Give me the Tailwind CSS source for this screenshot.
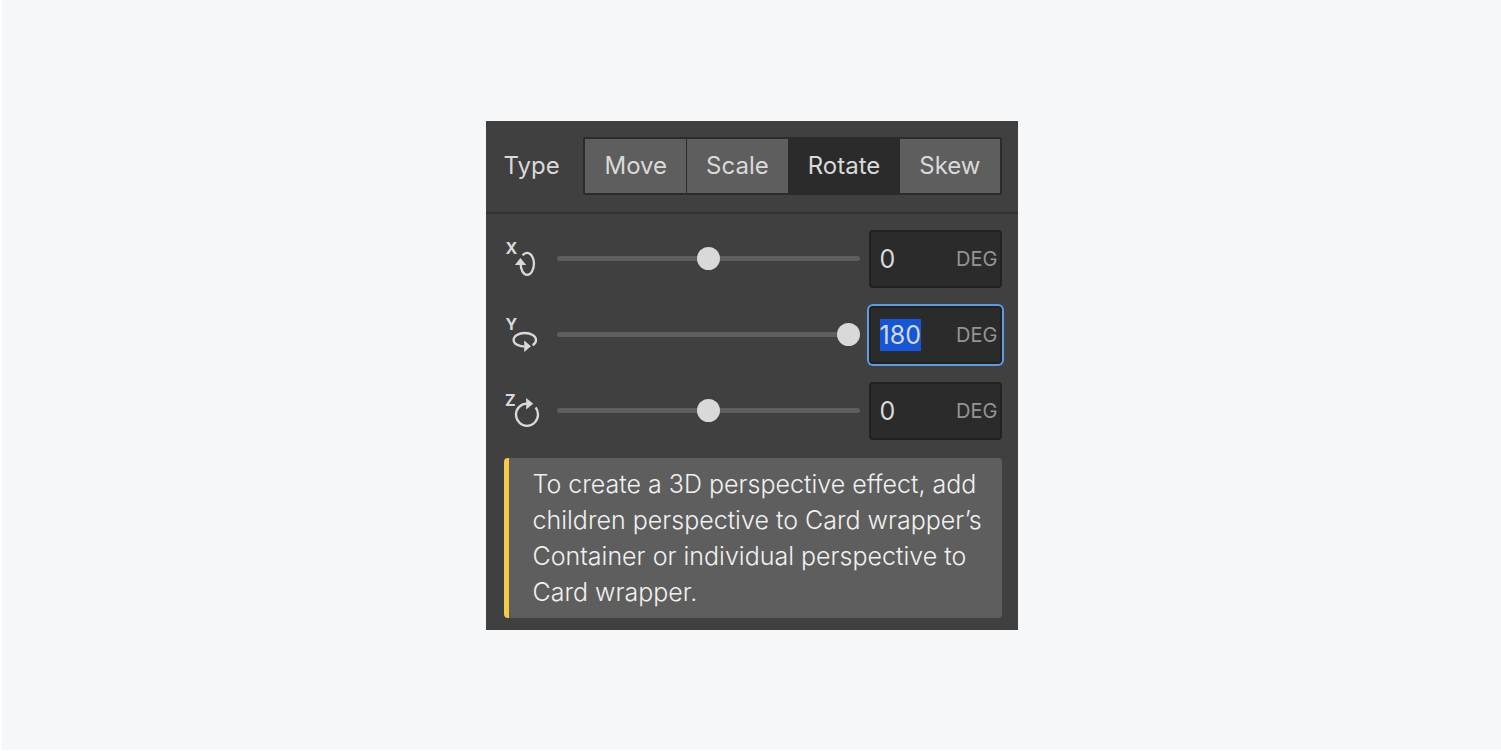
<!DOCTYPE html>
<html lang="en">
<head>
    <meta charset="UTF-8">
    <meta name="viewport" content="width=device-width, initial-scale=1.0">
    <title>3D Transform</title>
    <script src="https://cdn.jsdelivr.net/npm/@tailwindcss/browser@4"></script>
</head>
<body class="min-h-screen flex items-center justify-center bg-[#f5f7f9] border-l-2 border-b border-white font-['Inter',sans-serif] text-[25px] text-[#d9d9d9]">
    <form class="w-full max-w-[532px] bg-[#404040]">
        <!-- Transform type -->
        <div class="flex items-center justify-between gap-4 pl-[18px] pr-4 pt-4 pb-[17px] border-b-2 border-[#333333] text-2xl">
            <span id="typeLabel">Type</span>
            <div role="group" aria-labelledby="typeLabel" class="flex gap-px p-0.5 rounded-xs bg-[#2b2b2b]">
                <button type="button" class="px-[19px] py-[11px] bg-[#5e5e5e]">Move</button>
                <button type="button" class="px-[19px] py-[11px] bg-[#5e5e5e]">Scale</button>
                <button type="button" aria-pressed="true" class="px-[19px] py-[11px] bg-[#2b2b2b]">Rotate</button>
                <button type="button" class="px-[19px] py-[11px] bg-[#5e5e5e]">Skew</button>
            </div>
        </div>
        <div class="flex flex-col gap-[18px] pl-[18px] pr-4 pt-4 pb-3">
            <!-- Rotate X -->
            <div class="flex items-center">
                <svg class="w-10 h-10 mr-[13px] shrink-0" viewBox="0 0 40 40" fill="none" stroke="#d9d9d9" stroke-width="2.3">
                    <text x="1.5" y="15" class="text-base font-bold" fill="#d9d9d9" stroke="none">X</text>
                    <path d="M18.6 16.4C19.8 14.8 21.3 13.9 23 13.9C27 13.9 30 18.8 30 24.6C30 30.6 27 35.9 23.2 35.9C19.2 35.9 16.6 30.5 16.6 24" />
                    <path d="M10.9 26L16.4 19L22.2 26Z" fill="#d9d9d9" stroke="none" />
                </svg>
                <input type="range" min="-180" max="180" value="0" aria-label="Rotate X"
                    class="flex-1 min-w-0 h-6 appearance-none bg-transparent [&::-webkit-slider-runnable-track]:h-[5px] [&::-webkit-slider-runnable-track]:rounded-sm [&::-webkit-slider-runnable-track]:bg-[#5e5e5e] [&::-webkit-slider-thumb]:appearance-none [&::-webkit-slider-thumb]:size-[23px] [&::-webkit-slider-thumb]:-mt-[9px] [&::-webkit-slider-thumb]:rounded-full [&::-webkit-slider-thumb]:bg-[#d9d9d9]">
                <label class="flex items-center w-[133px] h-[58px] ml-[9px] pl-[9px] pr-0.5 border-2 border-[#212121] rounded-sm bg-[#2b2b2b]">
                    <input type="text" value="0" aria-label="Rotate X degrees" class="flex-1 min-w-0 leading-8 outline-none">
                    <span class="text-xl text-[#949494]">DEG</span>
                </label>
            </div>
            <!-- Rotate Y -->
            <div class="flex items-center">
                <svg class="w-10 h-10 mr-[13px] shrink-0" viewBox="0 0 40 40" fill="none" stroke="#d9d9d9" stroke-width="2.3">
                    <text x="1.5" y="15" class="text-base font-bold" fill="#d9d9d9" stroke="none">Y</text>
                    <path d="M20.5 31.6C14 31.4 9.6 28.6 9.6 25C9.6 21 14.6 18 20.8 18C27 18 32 21 32 25C32 27.2 30.8 29 28.6 30.2" />
                    <path d="M20.2 25.6L27 31.2L20.2 37Z" fill="#d9d9d9" stroke="none" />
                </svg>
                <input type="range" min="-180" max="180" value="180" aria-label="Rotate Y"
                    class="flex-1 min-w-0 h-6 appearance-none bg-transparent [&::-webkit-slider-runnable-track]:h-[5px] [&::-webkit-slider-runnable-track]:rounded-sm [&::-webkit-slider-runnable-track]:bg-[#5e5e5e] [&::-webkit-slider-thumb]:appearance-none [&::-webkit-slider-thumb]:size-[23px] [&::-webkit-slider-thumb]:-mt-[9px] [&::-webkit-slider-thumb]:rounded-full [&::-webkit-slider-thumb]:bg-[#d9d9d9]">
                <label class="flex items-center w-[133px] h-[58px] ml-[9px] pl-[9px] pr-0.5 border-2 border-[#212121] rounded-sm bg-[#2b2b2b] ring-2 ring-[#5b9de3]">
                    <input type="text" id="rotateY" value="180" aria-label="Rotate Y degrees" class="flex-1 min-w-0 leading-8 outline-none selection:bg-[#1455d9] selection:text-[#d9d9d9]">
                    <span class="text-xl text-[#949494]">DEG</span>
                </label>
            </div>
            <!-- Rotate Z -->
            <div class="flex items-center">
                <svg class="w-10 h-10 mr-[13px] shrink-0" viewBox="0 0 40 40" fill="none" stroke="#d9d9d9" stroke-width="2.3">
                    <text x="1" y="15" class="text-base font-bold" fill="#d9d9d9" stroke="none">Z</text>
                    <path d="M23 12.7C16.8 12.7 12 17.5 12 23.4C12 29.6 17 34.8 23 34.8C29.2 34.8 34 29.6 34 23.6C34 20.8 33.2 18.5 31.6 16.6" />
                    <path d="M22.2 6.9L29.2 12.7L22.2 18.5Z" fill="#d9d9d9" stroke="none" />
                </svg>
                <input type="range" min="-180" max="180" value="0" aria-label="Rotate Z"
                    class="flex-1 min-w-0 h-6 appearance-none bg-transparent [&::-webkit-slider-runnable-track]:h-[5px] [&::-webkit-slider-runnable-track]:rounded-sm [&::-webkit-slider-runnable-track]:bg-[#5e5e5e] [&::-webkit-slider-thumb]:appearance-none [&::-webkit-slider-thumb]:size-[23px] [&::-webkit-slider-thumb]:-mt-[9px] [&::-webkit-slider-thumb]:rounded-full [&::-webkit-slider-thumb]:bg-[#d9d9d9]">
                <label class="flex items-center w-[133px] h-[58px] ml-[9px] pl-[9px] pr-0.5 border-2 border-[#212121] rounded-sm bg-[#2b2b2b]">
                    <input type="text" value="0" aria-label="Rotate Z degrees" class="flex-1 min-w-0 leading-8 outline-none">
                    <span class="text-xl text-[#949494]">DEG</span>
                </label>
            </div>
            <!-- Hint -->
            <p class="pl-6 pr-3 py-2 border-l-5 border-[#f7c948] rounded-sm bg-[#5e5e5e] leading-9 font-light text-[#f0f0f0]">To create a 3D perspective effect, add children perspective to Card wrapper’s Container or individual perspective to Card wrapper.</p>
        </div>
    </form>
    <script>
        // Start with the Y value selected, ready to type over
        document.getElementById('rotateY').select();
    </script>
</body>
</html>
